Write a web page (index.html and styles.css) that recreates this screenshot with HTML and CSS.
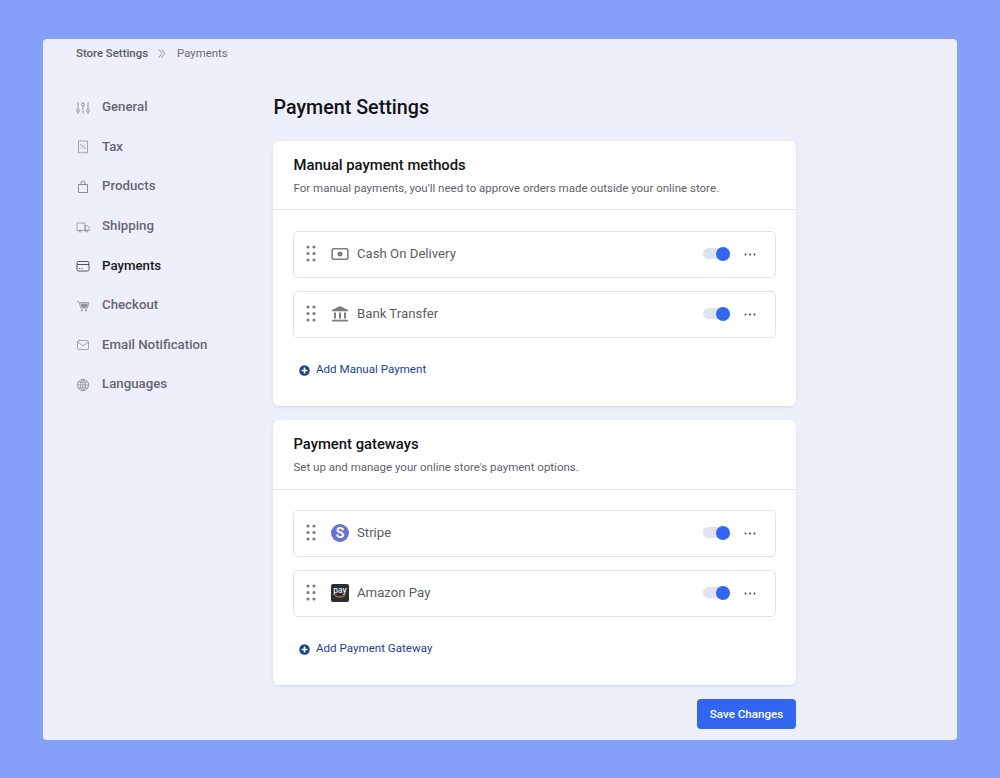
FILE: index.html
```html
<!DOCTYPE html>
<html lang="en">
<head>
<meta charset="utf-8">
<title>Payment Settings</title>
<link rel="stylesheet" href="styles.css">
</head>
<body>
<div class="panel">
  <div class="crumbs">
    <span class="crumb-root">Store Settings</span>
    <svg class="crumb-sep" viewBox="0 0 10 12" fill="none" stroke="#7b808c" stroke-width="1"><path d="M1 1l4 5-4 5M4.500 1l4 5-4 5"/></svg>
    <span class="crumb-cur">Payments</span>
  </div>
  <div class="layout">
    <nav class="nav">
      <a class="nav-item"><svg class="nav-icon" viewBox="0 0 14 14" fill="none" stroke="#7d818c" stroke-width="0.8"><path d="M2 1v7M2 11v2M7 1v1M7 5v8M12 1v7M12 11v2"/><circle cx="2" cy="9.500" r="1.400"/><circle cx="7" cy="3.500" r="1.400"/><circle cx="12" cy="9.500" r="1.400"/></svg>General</a>
      <a class="nav-item"><svg class="nav-icon" viewBox="0 0 14 14" fill="none" stroke="#8d919b" stroke-width="0.8"><path d="M2.500 1h9v12l-1.500-1-1.500 1-1.500-1-1.500 1-1.500-1-1.500 1z"/><path d="M5 8.500l4-4"/><circle cx="5.300" cy="5" r=".6"/><circle cx="8.700" cy="8" r=".6"/></svg>Tax</a>
      <a class="nav-item"><svg class="nav-icon" viewBox="0 0 14 14" fill="none" stroke="#7d818c" stroke-width="0.9"><path d="M2.500 4.500h9v8h-9z"/><path d="M5 4.500V3a2 2 0 0 1 4 0v1.500"/></svg>Products</a>
      <a class="nav-item"><svg class="nav-icon" viewBox="0 0 14 14" fill="none" stroke="#8d919b" stroke-width="0.8"><path d="M1 3h8v7.500H1zM9 5.500h2.500l1.700 2v3H9z"/><circle cx="4" cy="11" r="1.100"/><circle cx="10.500" cy="11" r="1.100"/></svg>Shipping</a>
      <a class="nav-item is-active"><svg class="nav-icon" viewBox="0 0 14 14" fill="none" stroke="#3f4450" stroke-width="0.9"><rect x="1" y="2.500" width="12" height="9.500" rx="1.500"/><path d="M1 5.500h12M3.200 9.500h1M5.500 9.500h1"/></svg>Payments</a>
      <a class="nav-item"><svg class="nav-icon" viewBox="0 0 14 14" fill="#8d919b"><path d="M1 2.500l2 .3 1.800 6.200h6.400L13 3.500H4" fill="none" stroke="#8d919b" stroke-width=".8"/><path d="M4.500 4.500h7.500l-1.300 4H5.500z"/><rect x="5" y="10.500" width="1.700" height="1.700"/><rect x="9" y="10.500" width="1.700" height="1.700"/></svg>Checkout</a>
      <a class="nav-item"><svg class="nav-icon" viewBox="0 0 14 14" fill="none" stroke="#8d919b" stroke-width="0.8"><rect x="1.500" y="2.500" width="11" height="9" rx="1.500"/><path d="M1.800 4l5.200 4 5.200-4"/></svg>Email Notification</a>
      <a class="nav-item"><svg class="nav-icon" viewBox="0 0 14 14" fill="none" stroke="#8d919b" stroke-width="0.8"><circle cx="7" cy="7" r="5.700"/><ellipse cx="7" cy="7" rx="2.500" ry="5.700"/><path d="M1.300 7h11.400M2 4.200h10M2 9.800h10M7 1.300v11.400"/></svg>Languages</a>
    </nav>
    <main class="main">
      <h1 class="title">Payment Settings</h1>
      <section class="card">
        <header class="card-head">
          <h2>Manual payment methods</h2>
          <p>For manual payments, you'll need to approve orders made outside your online store.</p>
        </header>
        <div class="card-body">
          <div class="row">
            <svg class="grip" viewBox="0 0 10 17" fill="#7a7d85"><circle cx="2" cy="2" r="1.600"/><circle cx="8" cy="2" r="1.600"/><circle cx="2" cy="8.500" r="1.600"/><circle cx="8" cy="8.500" r="1.600"/><circle cx="2" cy="15" r="1.600"/><circle cx="8" cy="15" r="1.600"/></svg>
            <svg class="method-icon" viewBox="0 0 18 18"><rect x="1.200" y="3.800" width="15.600" height="10.400" rx="1.200" fill="none" stroke="#7b7e84" stroke-width="1.600"/><circle cx="9" cy="9" r="2.500" fill="#7b7e84"/></svg>
            <span class="row-name">Cash On Delivery</span>
            <span class="toggle"><span class="knob"></span></span>
            <svg class="more" viewBox="0 0 12 3" fill="#33353b"><circle cx="1.500" cy="1.500" r=".9"/><circle cx="6" cy="1.500" r=".9"/><circle cx="10.500" cy="1.500" r=".9"/></svg>
          </div>
          <div class="row">
            <svg class="grip" viewBox="0 0 10 17" fill="#7a7d85"><circle cx="2" cy="2" r="1.600"/><circle cx="8" cy="2" r="1.600"/><circle cx="2" cy="8.500" r="1.600"/><circle cx="8" cy="8.500" r="1.600"/><circle cx="2" cy="15" r="1.600"/><circle cx="8" cy="15" r="1.600"/></svg>
            <svg class="method-icon" viewBox="0 0 18 18" fill="#7b7e84"><path d="M9 1l8 4v1.300H1V5z"/><rect x="3" y="7.500" width="2" height="6"/><rect x="8" y="7.500" width="2" height="6"/><rect x="13" y="7.500" width="2" height="6"/><rect x="1" y="14.700" width="16" height="1.800"/></svg>
            <span class="row-name">Bank Transfer</span>
            <span class="toggle"><span class="knob"></span></span>
            <svg class="more" viewBox="0 0 12 3" fill="#33353b"><circle cx="1.500" cy="1.500" r=".9"/><circle cx="6" cy="1.500" r=".9"/><circle cx="10.500" cy="1.500" r=".9"/></svg>
          </div>
          <a class="add"><svg class="add-icon" viewBox="0 0 12 12"><circle cx="6" cy="6" r="5.700" fill="#1c3f94"/><path d="M6 2.800v6.400M2.800 6h6.400" stroke="#fff" stroke-width="1.800"/></svg>Add Manual Payment</a>
        </div>
      </section>
      <section class="card">
        <header class="card-head">
          <h2>Payment gateways</h2>
          <p>Set up and manage your online store's payment options.</p>
        </header>
        <div class="card-body">
          <div class="row">
            <svg class="grip" viewBox="0 0 10 17" fill="#7a7d85"><circle cx="2" cy="2" r="1.600"/><circle cx="8" cy="2" r="1.600"/><circle cx="2" cy="8.500" r="1.600"/><circle cx="8" cy="8.500" r="1.600"/><circle cx="2" cy="15" r="1.600"/><circle cx="8" cy="15" r="1.600"/></svg>
            <span class="stripe">S</span>
            <span class="row-name">Stripe</span>
            <span class="toggle"><span class="knob"></span></span>
            <svg class="more" viewBox="0 0 12 3" fill="#33353b"><circle cx="1.500" cy="1.500" r=".9"/><circle cx="6" cy="1.500" r=".9"/><circle cx="10.500" cy="1.500" r=".9"/></svg>
          </div>
          <div class="row">
            <svg class="grip" viewBox="0 0 10 17" fill="#7a7d85"><circle cx="2" cy="2" r="1.600"/><circle cx="8" cy="2" r="1.600"/><circle cx="2" cy="8.500" r="1.600"/><circle cx="8" cy="8.500" r="1.600"/><circle cx="2" cy="15" r="1.600"/><circle cx="8" cy="15" r="1.600"/></svg>
            <span class="amazon"><span class="amazon-text">pay</span><svg class="amazon-smile" viewBox="0 0 12 3" fill="none" stroke="#d79a3c" stroke-width="1"><path d="M1 .6c3 2 7 2 10 0"/></svg></span>
            <span class="row-name">Amazon Pay</span>
            <span class="toggle"><span class="knob"></span></span>
            <svg class="more" viewBox="0 0 12 3" fill="#33353b"><circle cx="1.500" cy="1.500" r=".9"/><circle cx="6" cy="1.500" r=".9"/><circle cx="10.500" cy="1.500" r=".9"/></svg>
          </div>
          <a class="add"><svg class="add-icon" viewBox="0 0 12 12"><circle cx="6" cy="6" r="5.700" fill="#1c3f94"/><path d="M6 2.800v6.400M2.800 6h6.400" stroke="#fff" stroke-width="1.800"/></svg>Add Payment Gateway</a>
        </div>
      </section>
      <div class="actions"><button class="save">Save Changes</button></div>
    </main>
  </div>
</div>
</body>
</html>
```
FILE: styles.css
```css
* { box-sizing: border-box; }
html, body { margin: 0; height: 100%; }
body {
  background: #84a0f8;
  font-family: Roboto, "Liberation Sans", sans-serif;
  color: #5b5e68;
  padding: 39px 43px;
  overflow: hidden;
}
.panel {
  height: 700.5px;
  background: #edf0fa;
  border-radius: 4px;
  padding: 0 0 0 33px;
}
.crumbs {
  height: 28px;
  display: flex;
  align-items: center;
  font-size: 11.4px;
}
.crumb-root { color: #585c66; font-weight: 500; }
.crumb-sep { width: 8px; height: 11px; margin: 1px 11px 0 10px; }
.crumb-cur { color: #686c76; }
.layout { display: flex; }
.nav {
  width: 197px;
  padding-top: 20px;
  display: flex;
  flex-direction: column;
}
.nav-item {
  height: 39.6px;
  display: flex;
  align-items: center;
  font-size: 13.25px;
  font-weight: 500;
  color: #646772;
}
.nav-item.is-active { color: #17181c; }
.nav-icon { width: 14px; height: 14px; margin-right: 12px; flex: none; position: relative; top: 1px; }
.main { width: 523px; }
.title {
  margin: 0;
  height: 74px;
  padding: 26px 0 0 .5px;
  font-size: 19.7px;
  line-height: 30px;
  font-weight: 500;
  color: #111216;
}
.card {
  background: #fff;
  border-radius: 6px;
  box-shadow: 0 1px 3px rgba(60, 70, 110, .14);
  height: 265px;
  margin-bottom: 14px;
}
.card-head {
  height: 69px;
  padding: 14px 20.5px 0;
  border-bottom: 1px solid #e4e5e9;
}
.card + .card .card-head { height: 70px; }
.card + .card .card-body { padding-top: 20px; }
.card-head h2 {
  margin: 0;
  font-size: 14.8px;
  line-height: 20px;
  font-weight: 500;
  color: #111216;
}
.card-head p {
  margin: 5px 0 0;
  font-size: 11.5px;
  line-height: 16px;
  color: #5f626b;
}
.card-body {
  padding: 21px 20px 0;
  display: flex;
  flex-direction: column;
  gap: 13.5px;
}
.row {
  height: 46.5px;
  border: 1px solid #e2e4e9;
  border-radius: 5px;
  display: flex;
  align-items: center;
  padding: 0 19px 1px 12px;
}
.grip { width: 10px; height: 17px; flex: none; margin-right: 15px; }
.method-icon { width: 18px; height: 18px; flex: none; margin-right: 8px; }
.row-name { flex: 1; font-size: 13.2px; color: #5b5d63; }
.stripe {
  width: 18px;
  height: 18px;
  flex: none;
  margin-right: 8px;
  border-radius: 50%;
  background: #6772d3;
  color: #fff;
  font-size: 14px;
  font-weight: 700;
  line-height: 18px;
  text-align: center;
}
.amazon {
  width: 18px;
  height: 18px;
  flex: none;
  margin-right: 8px;
  border-radius: 2px;
  background: #2a2d33;
  display: flex;
  flex-direction: column;
  align-items: center;
}
.amazon-text { color: #e8e8ea; font-size: 8.5px; line-height: 10px; font-weight: 500; margin-top: 1px; }
.amazon-smile { width: 12px; height: 3px; }
.toggle {
  width: 27px;
  height: 11px;
  border-radius: 6px;
  background: #dde3f3;
  position: relative;
  flex: none;
  margin-right: 14px;
}
.knob {
  position: absolute;
  right: 0;
  top: -1.5px;
  width: 14px;
  height: 14px;
  border-radius: 50%;
  background: #3266f0;
}
.more { width: 12px; height: 3px; flex: none; position: relative; top: 1px; }
.add {
  display: flex;
  align-items: center;
  margin: 9px 0 0 6px;
  font-size: 11.6px;
  line-height: 18px;
  color: #1f4095;
}
.add-icon { width: 11px; height: 11px; margin-right: 6px; flex: none; position: relative; top: 1px; }
.actions { display: flex; justify-content: flex-end; }
.save {
  width: 99px;
  height: 30px;
  border: 0;
  border-radius: 4px;
  background: #3266f0;
  color: #fff;
  font: 500 11.6px Roboto, "Liberation Sans", sans-serif;
  padding: 0;
}
```
